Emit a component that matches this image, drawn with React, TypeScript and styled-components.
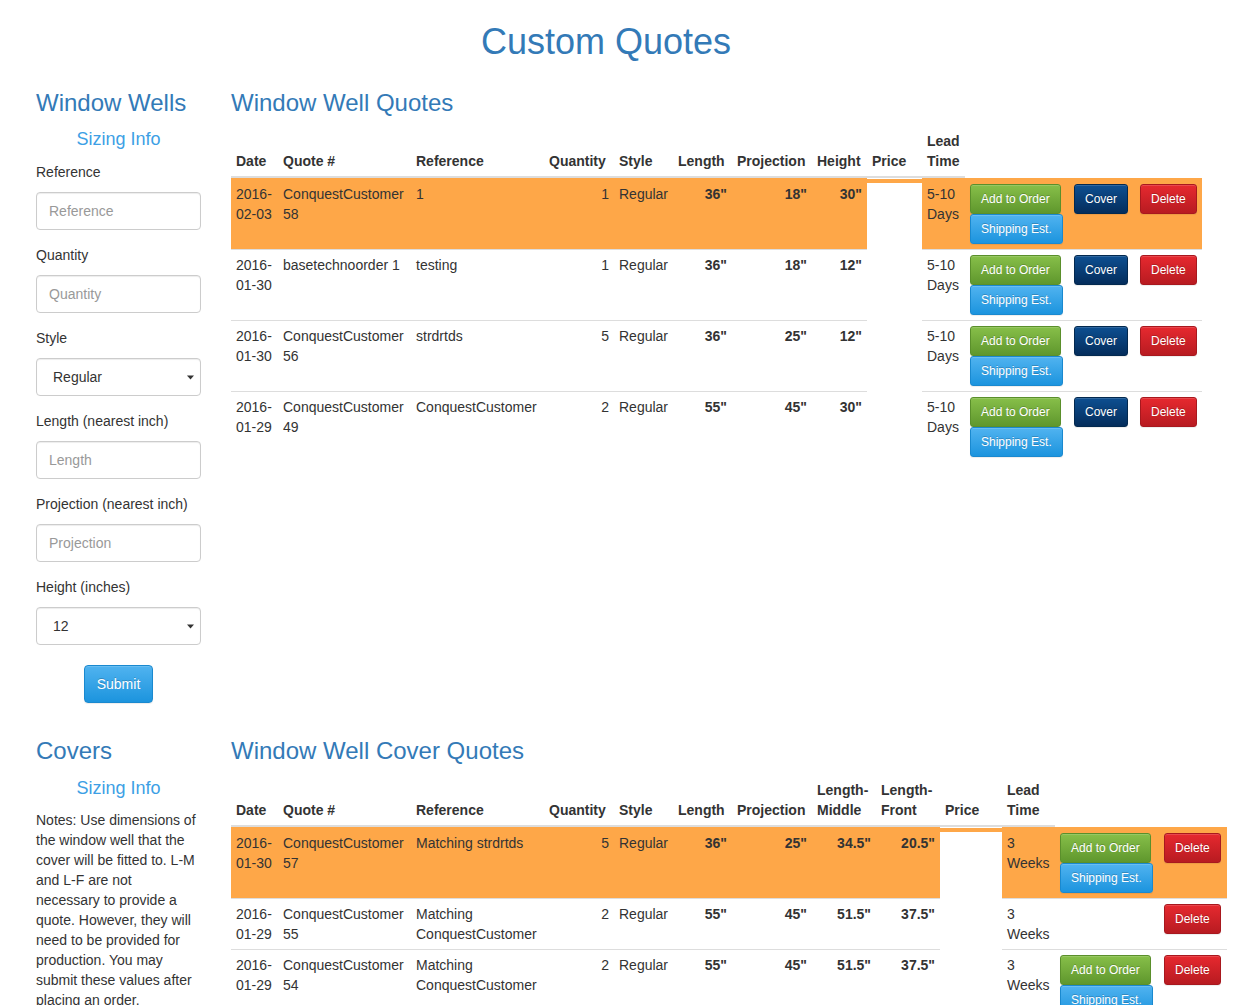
import React from 'react';
import styled, { createGlobalStyle, css } from 'styled-components';

const GlobalStyle = createGlobalStyle`
  *, *::before, *::after { box-sizing: border-box; }
  html, body { margin: 0; padding: 0; background: #fff; }
  body {
    font-family: "Liberation Sans", Arial, Helvetica, sans-serif;
    font-size: 14px;
    line-height: 20px;
    color: #333;
  }
`;

const ROW_HL = '#fea748';

const Container = styled.div`
  width: 1170px;
  margin-left: 21px;
  padding: 0 15px 40px;
`;

const PageTitle = styled.h1`
  margin: 22px 0 8px;
  font-size: 36px;
  line-height: 40px;
  font-weight: 400;
  color: #337ab7;
  text-align: center;
`;

const Section = styled.section`
  display: grid;
  grid-template-columns: 165px 945px;
  column-gap: 30px;
  align-items: start;
`;

const Sidebar = styled.aside`
  display: block;
  padding-bottom: 15px;
`;

const Main = styled.div`
  display: block;
`;

const Heading = styled.h3`
  margin: 20px 0 10px;
  font-size: 24px;
  line-height: 26.4px;
  font-weight: 400;
  color: #337ab7;
`;

const SizingLink = styled.a`
  display: block;
  margin: 12px 0;
  font-size: 18px;
  line-height: 22px;
  text-align: center;
  color: #3d9fe5;
  text-decoration: none;
`;

const FormGroup = styled.div`
  margin-bottom: 15px;
`;

const Label = styled.label`
  display: block;
  margin-bottom: 10px;
  font-weight: 400;
  line-height: 20px;
`;

const Input = styled.input`
  display: block;
  width: 100%;
  height: 38px;
  padding: 8px 12px;
  font-family: inherit;
  font-size: 14px;
  line-height: 20px;
  color: #555;
  background: #fff;
  border: 1px solid #ccc;
  border-radius: 4px;
  box-shadow: inset 0 1px 1px rgba(0, 0, 0, 0.075);
  outline: none;
  &::placeholder { color: #999; }
`;

const SelectBox = styled.div`
  display: flex;
  align-items: center;
  height: 38px;
  padding-right: 6px;
  background: #fff;
  border: 1px solid #ccc;
  border-radius: 4px;
  box-shadow: inset 0 1px 1px rgba(0, 0, 0, 0.075);
`;

const Select = styled.select`
  flex: 1;
  min-width: 0;
  height: 100%;
  padding: 0 0 0 16px;
  appearance: none;
  -webkit-appearance: none;
  border: 0;
  background: transparent;
  font-family: inherit;
  font-size: 14px;
  color: #333;
  outline: none;
`;

const SubmitRow = styled.div`
  margin-top: 20px;
  text-align: center;
`;

const Notes = styled.p`
  width: 161px;
  margin: -1px 0 0;
  line-height: 20px;
`;

type Variant = 'success' | 'navy' | 'danger' | 'info';

const variants: Record<Variant, ReturnType<typeof css>> = {
  success: css`
    background-image: linear-gradient(to bottom, #87bf49 0%, #5f972d 100%);
    border-color: #5a8f2b;
  `,
  navy: css`
    background-image: linear-gradient(to bottom, #0d4f91 0%, #042d5c 100%);
    border-color: #03294f;
  `,
  danger: css`
    background-image: linear-gradient(to bottom, #e6292f 0%, #b81b21 100%);
    border-color: #a8181e;
  `,
  info: css`
    background-image: linear-gradient(to bottom, #50b3f0 0%, #1c94de 100%);
    border-color: #1a89cf;
  `,
};

const Btn = styled.button<{ $variant: Variant; $large?: boolean }>`
  display: inline-block;
  margin: 0;
  font-family: inherit;
  font-weight: 400;
  color: #fff;
  white-space: nowrap;
  border: 1px solid;
  text-shadow: 0 -1px 0 rgba(0, 0, 0, 0.2);
  box-shadow: inset 0 1px 0 rgba(255, 255, 255, 0.15), 0 1px 1px rgba(0, 0, 0, 0.075);
  cursor: pointer;
  ${(p) =>
    p.$large
      ? css`
          font-size: 14px;
          line-height: 20px;
          padding: 8px 12px;
          border-radius: 4px;
        `
      : css`
          font-size: 12px;
          line-height: 18px;
          padding: 5px 10px;
          border-radius: 3px;
        `}
  ${(p) => variants[p.$variant]}
`;

const ButtonStack = styled.div`
  display: flex;
  flex-direction: column;
  align-items: flex-start;
`;

const Table = styled.table<{ $width: number }>`
  table-layout: fixed;
  border-collapse: separate;
  border-spacing: 0;
  width: ${(p) => p.$width}px;
  & > tbody > tr:first-child > td {
    border-top-color: transparent;
  }
`;

const Col = styled.col<{ $w: number }>`
  width: ${(p) => p.$w}px;
`;

const Th = styled.th`
  padding: 5px;
  text-align: left;
  vertical-align: bottom;
  font-weight: 700;
  line-height: 20px;
  border-bottom: 2px solid #ddd;
`;

const Tr = styled.tr<{ $hl?: boolean }>`
  background: ${(p) => (p.$hl ? ROW_HL : 'transparent')};
`;

const Td = styled.td<{ $right?: boolean; $bold?: boolean }>`
  padding: 5px;
  vertical-align: top;
  line-height: 20px;
  border-top: 1px solid #ddd;
  text-align: ${(p) => (p.$right ? 'right' : 'left')};
  font-weight: ${(p) => (p.$bold ? 700 : 400)};
`;

const PriceTd = styled.td<{ $hl?: boolean }>`
  padding: 5px;
  border-top: 1px solid transparent;
  background: ${(p) =>
    p.$hl ? `linear-gradient(to bottom, ${ROW_HL} 0, ${ROW_HL} 4px, #fff 4px)` : '#fff'};
`;

const Arrow = () => (
  <svg width="7" height="5" viewBox="0 0 7 5">
    <path d="M0 0.5H7L3.5 4.5Z" fill="#333" />
  </svg>
);

const DateText = ({ d }: { d: string }) => {
  const [y, ...rest] = d.split('-');
  return (
    <>
      {y}-<wbr />
      {rest.join('-')}
    </>
  );
};

type WellQuote = {
  date: string;
  quote: string;
  reference: string;
  qty: number;
  length: string;
  projection: string;
  height: string;
  hl?: boolean;
};

const wellQuotes: WellQuote[] = [
  { date: '2016-02-03', quote: 'ConquestCustomer 58', reference: '1', qty: 1, length: '36"', projection: '18"', height: '30"', hl: true },
  { date: '2016-01-30', quote: 'basetechnoorder 1', reference: 'testing', qty: 1, length: '36"', projection: '18"', height: '12"' },
  { date: '2016-01-30', quote: 'ConquestCustomer 56', reference: 'strdrtds', qty: 5, length: '36"', projection: '25"', height: '12"' },
  { date: '2016-01-29', quote: 'ConquestCustomer 49', reference: 'ConquestCustomer', qty: 2, length: '55"', projection: '45"', height: '30"' },
];

type CoverQuote = {
  date: string;
  quote: string;
  reference: string;
  qty: number;
  length: string;
  projection: string;
  middle: string;
  front: string;
  hl?: boolean;
  orderable: boolean;
};

const coverQuotes: CoverQuote[] = [
  { date: '2016-01-30', quote: 'ConquestCustomer 57', reference: 'Matching strdrtds', qty: 5, length: '36"', projection: '25"', middle: '34.5"', front: '20.5"', hl: true, orderable: true },
  { date: '2016-01-29', quote: 'ConquestCustomer 55', reference: 'Matching ConquestCustomer', qty: 2, length: '55"', projection: '45"', middle: '51.5"', front: '37.5"', orderable: false },
  { date: '2016-01-29', quote: 'ConquestCustomer 54', reference: 'Matching ConquestCustomer', qty: 2, length: '55"', projection: '45"', middle: '51.5"', front: '37.5"', orderable: true },
];

const wellCols = [47, 133, 133, 70, 59, 59, 80, 55, 55, 43, 104, 66, 67];
const coverCols = [47, 133, 133, 70, 59, 59, 80, 64, 64, 62, 53, 104, 68];
const sum = (a: number[]) => a.reduce((s, n) => s + n, 0);

const OrderButtons = () => (
  <ButtonStack>
    <Btn $variant="success">Add to Order</Btn>
    <Btn $variant="info">Shipping Est.</Btn>
  </ButtonStack>
);

const WellTable = () => (
  <Table $width={sum(wellCols)}>
    <colgroup>
      {wellCols.map((w, i) => (
        <Col key={i} $w={w} />
      ))}
    </colgroup>
    <thead>
      <tr>
        <Th>Date</Th>
        <Th>Quote #</Th>
        <Th>Reference</Th>
        <Th>Quantity</Th>
        <Th>Style</Th>
        <Th>Length</Th>
        <Th>Projection</Th>
        <Th>Height</Th>
        <Th>Price</Th>
        <Th>Lead Time</Th>
      </tr>
    </thead>
    <tbody>
      {wellQuotes.map((q, i) => (
        <Tr key={i} $hl={q.hl}>
          <Td><DateText d={q.date} /></Td>
          <Td>{q.quote}</Td>
          <Td>{q.reference}</Td>
          <Td $right>{q.qty}</Td>
          <Td>Regular</Td>
          <Td $right $bold>{q.length}</Td>
          <Td $right $bold>{q.projection}</Td>
          <Td $right $bold>{q.height}</Td>
          <PriceTd $hl={q.hl} />
          <Td>5-10 Days</Td>
          <Td><OrderButtons /></Td>
          <Td><Btn $variant="navy">Cover</Btn></Td>
          <Td><Btn $variant="danger">Delete</Btn></Td>
        </Tr>
      ))}
    </tbody>
  </Table>
);

const CoverTable = () => (
  <Table $width={sum(coverCols)}>
    <colgroup>
      {coverCols.map((w, i) => (
        <Col key={i} $w={w} />
      ))}
    </colgroup>
    <thead>
      <tr>
        <Th>Date</Th>
        <Th>Quote #</Th>
        <Th>Reference</Th>
        <Th>Quantity</Th>
        <Th>Style</Th>
        <Th>Length</Th>
        <Th>Projection</Th>
        <Th>Length-<wbr />Middle</Th>
        <Th>Length-<wbr />Front</Th>
        <Th>Price</Th>
        <Th>Lead Time</Th>
      </tr>
    </thead>
    <tbody>
      {coverQuotes.map((q, i) => (
        <Tr key={i} $hl={q.hl}>
          <Td><DateText d={q.date} /></Td>
          <Td>{q.quote}</Td>
          <Td>{q.reference}</Td>
          <Td $right>{q.qty}</Td>
          <Td>Regular</Td>
          <Td $right $bold>{q.length}</Td>
          <Td $right $bold>{q.projection}</Td>
          <Td $right $bold>{q.middle}</Td>
          <Td $right $bold>{q.front}</Td>
          <PriceTd $hl={q.hl} />
          <Td>3 Weeks</Td>
          <Td>{q.orderable ? <OrderButtons /> : null}</Td>
          <Td><Btn $variant="danger">Delete</Btn></Td>
        </Tr>
      ))}
    </tbody>
  </Table>
);

const TextField = ({ label, placeholder }: { label: string; placeholder: string }) => (
  <FormGroup>
    <Label>{label}</Label>
    <Input placeholder={placeholder} />
  </FormGroup>
);

const SelectField = ({ label, options, value }: { label: string; options: string[]; value: string }) => (
  <FormGroup>
    <Label>{label}</Label>
    <SelectBox>
      <Select defaultValue={value}>
        {options.map((o) => (
          <option key={o} value={o}>{o}</option>
        ))}
      </Select>
      <Arrow />
    </SelectBox>
  </FormGroup>
);

export default function App() {
  return (
    <>
      <GlobalStyle />
      <Container>
        <PageTitle>Custom Quotes</PageTitle>
        <Section>
          <Sidebar>
            <Heading>Window Wells</Heading>
            <SizingLink href="#">Sizing Info</SizingLink>
            <TextField label="Reference" placeholder="Reference" />
            <TextField label="Quantity" placeholder="Quantity" />
            <SelectField label="Style" options={['Regular', 'Tall', 'Custom']} value="Regular" />
            <TextField label="Length (nearest inch)" placeholder="Length" />
            <TextField label="Projection (nearest inch)" placeholder="Projection" />
            <SelectField label="Height (inches)" options={['12', '18', '24', '30', '36']} value="12" />
            <SubmitRow>
              <Btn $variant="info" $large>Submit</Btn>
            </SubmitRow>
          </Sidebar>
          <Main>
            <Heading>Window Well Quotes</Heading>
            <WellTable />
          </Main>
        </Section>
        <Section>
          <Sidebar>
            <Heading>Covers</Heading>
            <SizingLink href="#">Sizing Info</SizingLink>
            <Notes>
              Notes: Use dimensions of the window well that the cover will be fitted to. L-M and L-F are not
              necessary to provide a quote. However, they will need to be provided for production. You may
              submit these values after placing an order.
            </Notes>
          </Sidebar>
          <Main>
            <Heading>Window Well Cover Quotes</Heading>
            <CoverTable />
          </Main>
        </Section>
      </Container>
    </>
  );
}
